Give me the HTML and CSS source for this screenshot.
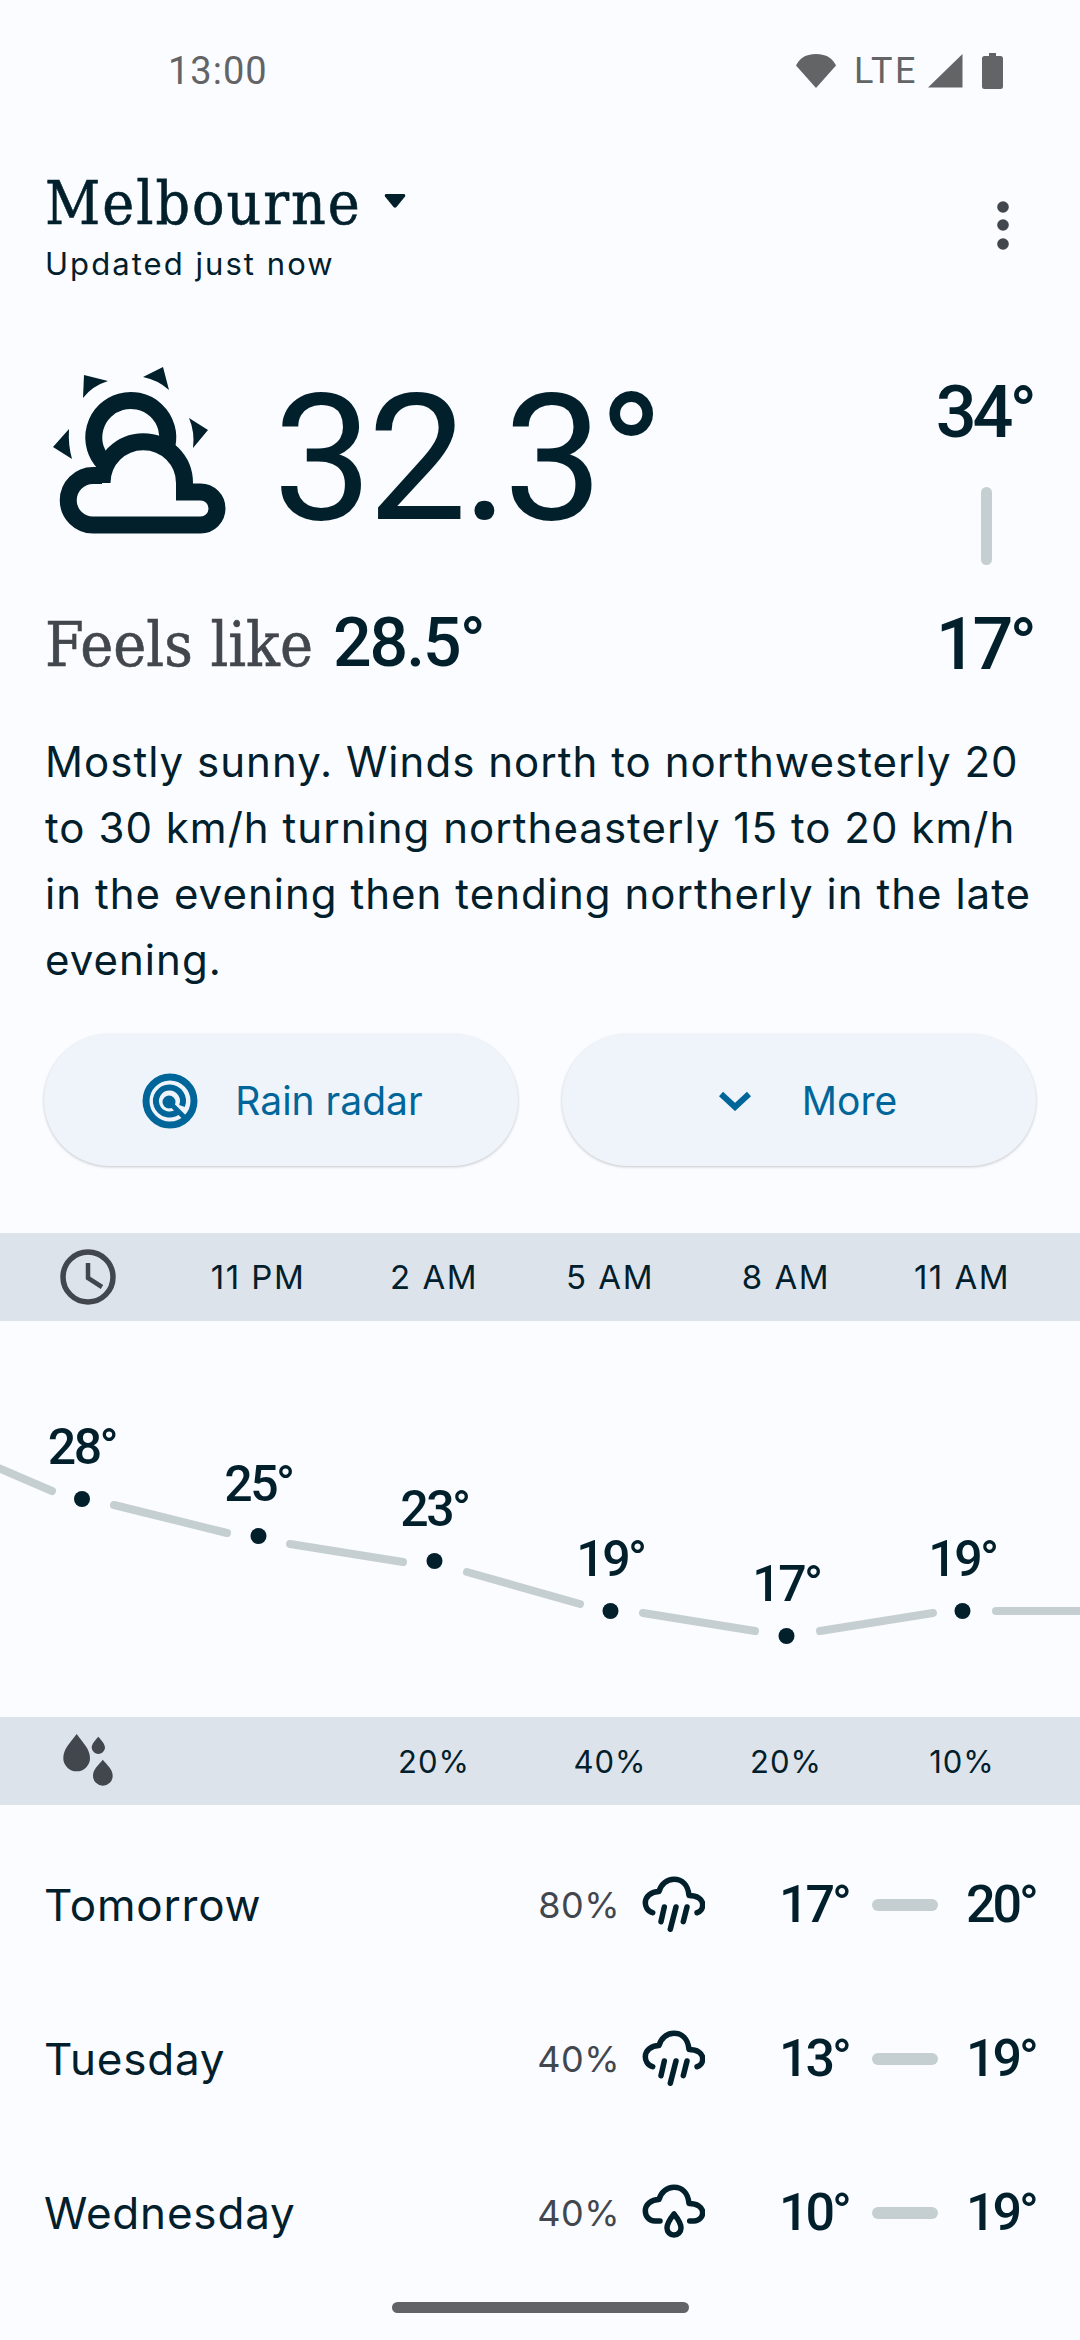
FILE: index.html
```html
<!DOCTYPE html>
<html lang="en">
<head>
<meta charset="utf-8">
<title>Melbourne weather</title>
<link rel="stylesheet" href="styles.css">
</head>
<body>
<div class="screen">
  <div class="status">
    <span class="clock-text">13:00</span>
    <div class="status-icons">
      <svg class="i-wifi" viewBox="0 0 42 36"><path d="M21 35 1 12.500C1 12.500 3 8 7 5 11 2 16 1 21 1s10 1 14 4c4 3 6 7.500 6 7.500Z"/></svg>
      <span class="lte">LTE</span>
      <svg class="i-signal" viewBox="0 0 35 34"><path d="M34.500 0V33.500H0Z"/></svg>
      <svg class="i-batt" viewBox="0 0 21 36"><path d="M7 0h7v3h4.500Q21 3 21 5.500v28Q21 36 18.500 36h-16Q0 36 0 33.500v-28Q0 3 2.500 3H7Z"/></svg>
    </div>
  </div>

  <header class="head">
    <div>
      <div class="city-row">
        <h1 class="city">Melbourne</h1>
        <svg class="i-drop" viewBox="0 0 22 14"><path d="M2.500 0h17q2.500 0 1.500 2.500L12.500 13q-1.500 1.500-3 0L1 2.500Q0 0 2.500 0Z"/></svg>
      </div>
      <div class="updated">Updated just now</div>
    </div>
    <svg class="i-more" viewBox="0 0 12 50"><circle cx="6" cy="6" r="5.800"/><circle cx="6" cy="24" r="5.800"/><circle cx="6" cy="43" r="5.800"/></svg>
  </header>

  <section class="hero">
    <svg class="i-sun" viewBox="0 0 200 200">
      <path class="fill" d="M44 25 68 31Q52 36 43 48ZM123 17 129 40Q118 30 103 27ZM149 68 168 80 153 98Q155 82 149 68ZM29 79 13 97 32 109Q28 95 29 79Z"/>
      <path class="ln" d="M64 113A37 37 0 1 1 127 95"/>
      <path class="ln" d="M53 175A24.750 24.750 0 0 1 53 125.500H62V133A41.250 41.250 0 0 1 144.500 133V142H160.500A16.500 16.500 0 0 1 160.500 175Z"/>
    </svg>
    <div class="now">32.3°</div>
    <div class="hi">34°</div>
  </section>
  <div class="feels-row">
    <div class="feels"><span class="feels-l">Feels like</span><span class="feels-v">28.5°</span></div>
    <div class="range"></div>
    <div class="lo">17°</div>
  </div>

  <p class="summary">Mostly sunny. Winds north to northwesterly 20 to 30 km/h turning northeasterly 15 to 20 km/h in the evening then tending northerly in the late evening.</p>

  <div class="actions">
    <button class="btn btn-radar">
      <svg class="i-radar" viewBox="0 0 56 56"><circle class="r1" cx="28" cy="28" r="24"/><path class="r2" d="M36.500 38A13.500 13.500 0 1 1 40 33"/><circle class="dotf" cx="27" cy="29" r="6.500"/><path class="r3" d="M27 29 45 47"/></svg>
      <span>Rain radar</span>
    </button>
    <button class="btn btn-more">
      <svg class="i-chev" viewBox="0 0 32 20"><path d="M2 3 16 16 30 3"/></svg>
      <span>More</span>
    </button>
  </div>

  <div class="band band-time">
    <svg class="i-clock" viewBox="0 0 56 56"><circle cx="28" cy="28" r="25"/><path d="M28 14V29L42 38"/></svg>
    <span class="cell">11 PM</span><span class="cell">2 AM</span><span class="cell">5 AM</span><span class="cell">8 AM</span><span class="cell">11 AM</span>
  </div>

  <svg class="chart" viewBox="0 0 1080 396">
    <g class="seg">
      <path d="M-4 146 52 170"/><path d="M114 184 227 212"/><path d="M290 223 403 241"/><path d="M467 251 580 283"/><path d="M643 292 755 310"/><path d="M820 310 933 292"/><path d="M996 290H1090"/>
    </g>
    <g class="pt">
      <circle cx="82" cy="178" r="8"/><circle cx="258.500" cy="215" r="8"/><circle cx="434.500" cy="240" r="8"/><circle cx="610.500" cy="290" r="8"/><circle cx="786.500" cy="315" r="8"/><circle cx="962.500" cy="290" r="8"/>
    </g>
    <g class="lbl">
      <text x="82" y="143">28°</text><text x="258.500" y="180">25°</text><text x="434.500" y="205">23°</text><text x="610.500" y="255">19°</text><text x="786.500" y="280">17°</text><text x="962.500" y="255">19°</text>
    </g>
  </svg>

  <div class="band band-rain">
    <svg class="i-drops" viewBox="0 0 54 54"><path d="M16.700 0C23 9 30 15 30 24A13.350 13.350 0 0 1 3.300 24C3.300 15 10 9 16.700 0ZM38.300 2.700C42 7 45 10 45 14A6.700 6.700 0 0 1 31.700 14C31.700 10 34.600 7 38.300 2.700ZM42.800 25.700C47 31 52.700 35 52.700 41.800A9.850 9.850 0 0 1 33 41.800C33 35 38.600 31 42.800 25.700Z"/></svg>
    <span class="cell"></span><span class="cell">20%</span><span class="cell">40%</span><span class="cell">20%</span><span class="cell">10%</span>
  </div>

  <div class="days">
    <div class="day">
      <span class="day-n">Tomorrow</span><span class="pct">80%</span>
      <svg class="i-wx" viewBox="0 0 64 64"><path d="M11.700 39.700C6 38 4.300 33 4.300 29.700 4.300 23.500 10 18.500 18 18.500 20 11 26 6.300 33 6.300 41 6.300 47 12 48 22.500 56 22.500 61.700 26 61.700 31.500 61.700 36 59 39 56 39.700M23.300 34 20 48.700M35 34 29.300 56.300M46 34 42.300 48.700"/></svg>
      <span class="t-lo">17°</span><span class="bar"></span><span class="t-hi">20°</span>
    </div>
    <div class="day">
      <span class="day-n">Tuesday</span><span class="pct">40%</span>
      <svg class="i-wx" viewBox="0 0 64 64"><path d="M11.700 39.700C6 38 4.300 33 4.300 29.700 4.300 23.500 10 18.500 18 18.500 20 11 26 6.300 33 6.300 41 6.300 47 12 48 22.500 56 22.500 61.700 26 61.700 31.500 61.700 36 59 39 56 39.700M23.300 34 20 48.700M35 34 29.300 56.300M46 34 42.300 48.700"/></svg>
      <span class="t-lo">13°</span><span class="bar"></span><span class="t-hi">19°</span>
    </div>
    <div class="day">
      <span class="day-n">Wednesday</span><span class="pct">40%</span>
      <svg class="i-wx" viewBox="0 0 64 64"><path d="M19 40H14C8 40 4.300 35 4.300 29.700 4.300 23.500 10 18.500 18 18.500 20 11 26 6.300 33 6.300 41 6.300 47 12 48 22.500 56 22.500 61.700 26 61.700 31.500 61.700 36 58 40 53 40H48.700M33 33C29 38 26 42 26 47A7 7 0 0 0 40 47C40 42 37 38 33 33Z"/></svg>
      <span class="t-lo">10°</span><span class="bar"></span><span class="t-hi">19°</span>
    </div>
  </div>

  <div class="nav"><span class="handle"></span></div>
</div>
</body>
</html>
```

FILE: styles.css
```css
* { box-sizing: border-box; }
html, body { margin: 0; padding: 0; }
body { background: #fbfcff; color: #02202c; font-family: Inter, "Noto Sans", sans-serif; }
.screen { width: 1080px; height: 2340px; overflow: hidden; display: flex; flex-direction: column; }
svg { display: block; flex: none; }

.status { height: 140px; padding: 48px 0 0 168px; display: flex; justify-content: space-between; align-items: flex-start; color: #636466; }
.clock-text { font: 400 38px/46px Roboto, sans-serif; letter-spacing: 1px; }
.status-icons { display: flex; align-items: flex-start; padding: 5px 77px 0 0; }
.i-wifi { width: 42px; height: 36px; fill: #636466; margin-right: 17px; }
.lte { font: 400 36px/36px Roboto, sans-serif; letter-spacing: 2.500px; width: 62px; margin-right: 12px; }
.i-signal { width: 35px; height: 34px; fill: #636466; margin: 1px 19px 0 0; }
.i-batt { width: 21px; height: 36px; fill: #636466; }

.head { padding: 32px 71px 0 45px; height: 218px; display: flex; justify-content: space-between; align-items: flex-start; }
.city-row { display: flex; align-items: center; height: 62px; }
.city { margin: 0; font: 400 60px/62px "DejaVu Serif Condensed", "DejaVu Serif", serif; font-stretch: condensed; letter-spacing: 2px; -webkit-text-stroke: 0.6px #02202c; }
.i-drop { width: 22px; height: 14px; fill: #02202c; margin: 0 0 4px 22px; }
.updated { font-size: 31px; line-height: 40px; letter-spacing: 2.050px; margin-top: 10px; }
.i-more { width: 12px; height: 50px; fill: #42474e; margin-top: 29px; }

.hero { padding: 0 47px 0 40px; height: 196px; display: flex; align-items: flex-start; }
.i-sun { width: 200px; height: 200px; margin-top: -8px; }
.i-sun .fill { fill: #02202c; }
.i-sun .ln { fill: none; stroke: #02202c; stroke-width: 17; }
.now { font: 400 177px/190px Roboto, sans-serif; letter-spacing: -5px; margin: 6px 0 0 33px; flex: 1; white-space: nowrap; }
.hi, .lo { font: 500 72px/70px Roboto, sans-serif; letter-spacing: -4px; }
.hi { margin-top: 20px; }

.feels-row { padding: 0 47px 0 45px; height: 126px; display: flex; align-items: flex-end; position: relative; }
.feels { flex: 1; display: flex; align-items: baseline; gap: 20px; }
.feels-l { font: 400 62px/70px "DejaVu Serif Condensed", "DejaVu Serif", serif; font-stretch: condensed; color: #42474e; -webkit-text-stroke: 0.6px #42474e; padding-top: 2px; }
.feels-v { font: 500 68px/70px Roboto, sans-serif; letter-spacing: -2px; }
.range { position: absolute; left: 981px; top: -67px; width: 11px; height: 78px; border-radius: 6px; background: #c5cfd1; }

.summary { margin: 49px 0 0; padding: 0 30px 0 45px; font-size: 42px; line-height: 66px; letter-spacing: 1.030px; }

.actions { display: flex; justify-content: space-between; padding: 0 44px; margin-top: 41px; }
.btn { width: 474px; height: 132px; border: 0; border-radius: 66px; background: #eef4fa; box-shadow: 0 1px 3px rgba(0,0,0,.22); color: #00669a; font: 400 39px/48px Inter, sans-serif; display: flex; align-items: center; justify-content: center; padding: 2px 0 0; }
.btn-radar { gap: 37px; padding-left: 3px; }
.btn-more { gap: 51px; padding-left: 18px; }
.i-radar { width: 56px; height: 56px; }
.i-radar .r1, .i-radar .r2, .i-radar .r3 { fill: none; stroke: #00669a; }
.i-radar .r1 { stroke-width: 7; }
.i-radar .r2 { stroke-width: 6; }
.i-radar .r3 { stroke-width: 5; }
.i-radar .dotf { fill: #00669a; }
.i-chev { width: 32px; height: 20px; fill: none; stroke: #00669a; stroke-width: 6; }

.band { height: 88px; background: #dde3ea; display: grid; grid-template-columns: 170px repeat(5, 176px); align-items: center; }
.band-time { margin-top: 67px; font-size: 33px; letter-spacing: 1.500px; }
.band-rain { font-size: 31px; letter-spacing: 1px; }
.cell { text-align: center; }
.i-clock { width: 56px; height: 56px; margin-left: 60px; fill: none; stroke: #42474e; stroke-width: 5.500; }
.i-clock path { stroke-width: 4.500; }

.chart { width: 1080px; height: 396px; }
.seg path { fill: none; stroke: #c5cfd1; stroke-width: 8; stroke-linecap: round; }
.pt circle { fill: #02202c; }
.lbl text { font: 500 50px Roboto, sans-serif; letter-spacing: -2.500px; text-anchor: middle; fill: #02202c; }

.i-drops { width: 54px; height: 54px; margin-left: 60px; fill: #42474e; }

.days { padding: 23px 44px 0 44px; display: flex; flex-direction: column; }
.day { height: 154px; display: flex; align-items: center; }
.day-n { flex: 1; font-size: 44px; letter-spacing: 0.800px; }
.pct { font-size: 36px; letter-spacing: 0.500px; color: #42474e; }
.i-wx { width: 64px; height: 64px; margin: 0 0 0 21px; fill: none; stroke: #02202c; stroke-width: 5.500; stroke-linecap: round; stroke-linejoin: round; }
.t-lo, .t-hi { font: 500 52px/60px Roboto, sans-serif; letter-spacing: -3px; }
.t-lo { width: 144px; text-align: right; }
.t-hi { width: 98px; text-align: right; }
.bar { width: 66px; height: 12px; border-radius: 6px; background: #c5cfd1; margin-left: 23px; }

.nav { flex: 1; display: flex; justify-content: center; padding-top: 12px; }
.handle { width: 297px; height: 11px; border-radius: 6px; background: #626366; }
```
